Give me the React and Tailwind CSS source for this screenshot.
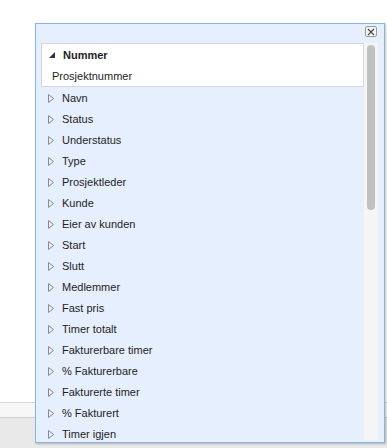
import React from "react";

const items = [
  "Navn",
  "Status",
  "Understatus",
  "Type",
  "Prosjektleder",
  "Kunde",
  "Eier av kunden",
  "Start",
  "Slutt",
  "Medlemmer",
  "Fast pris",
  "Timer totalt",
  "Fakturerbare timer",
  "% Fakturerbare",
  "Fakturerte timer",
  "% Fakturert",
  "Timer igjen",
];

function Hollow() {
  return (
    <svg width="6" height="9" viewBox="0 0 6 9" className="shrink-0">
      <path d="M0.5 0.5 L5.5 4.5 L0.5 8.5 Z" fill="none" stroke="#8a8a8a" strokeWidth="1" />
    </svg>
  );
}

function Filled() {
  return (
    <svg width="6" height="6" viewBox="0 0 6 6" className="shrink-0">
      <path d="M6 0 L6 6 L0 6 Z" fill="#333" />
    </svg>
  );
}

export default function App() {
  return (
    <div
      className="relative w-[387px] h-[448px] bg-white overflow-hidden"
      style={{ fontFamily: '"Liberation Sans", Arial, sans-serif' }}
    >
      <div className="flex flex-col h-full">
        <div className="h-[402px]" />
        <div className="h-[15px] border-t border-[#d9d9d9] bg-[#f7f7f7]" />
        <div className="flex-1 border-t border-[#cfcfcf] bg-[#e9e9e9]" />
      </div>

      <div className="absolute left-[35px] top-[23px] w-[350px] h-[420px] border border-[#8eb2df] bg-[#e6effd] shadow-[1px_1px_2px_rgba(0,0,0,0.25)] flex flex-col">
        <div className="h-[19px] flex justify-end pr-[7px] pt-[2px]">
          <div className="w-[12px] h-[11px] border border-[#9a9a9a] rounded-[2px] bg-[#f4f4f4] flex items-center justify-center">
            <svg width="8" height="8" viewBox="0 0 8 8">
              <path d="M1 1 L7 7 M7 1 L1 7" stroke="#444" strokeWidth="1.1" />
            </svg>
          </div>
        </div>
        <div className="flex flex-1 min-h-0 pl-[5px] pb-[2px]">
          <div className="w-[323px] overflow-hidden text-[11px] text-[#1e1e1e]">
            <div className="border border-[#d6d6d6] bg-white">
              <div className="h-[21px] flex items-center pl-[7px] gap-[8px] font-bold pt-px">
                <Filled />
                <span>Nummer</span>
              </div>
              <div className="h-[21px] flex items-center pl-[10px] pt-px">Prosjektnummer</div>
            </div>
            {items.map((t) => (
              <div key={t} className="h-[21px] flex items-center pl-[7px] gap-[8px] pt-px">
                <Hollow />
                <span>{t}</span>
              </div>
            ))}
          </div>
          <div className="w-[14px] bg-[#f5f5f5] pt-[2px] flex justify-center">
            <div className="w-[8px] h-[165px] rounded-[4px] bg-[#c1c1c1]" />
          </div>
        </div>
      </div>
    </div>
  );
}
